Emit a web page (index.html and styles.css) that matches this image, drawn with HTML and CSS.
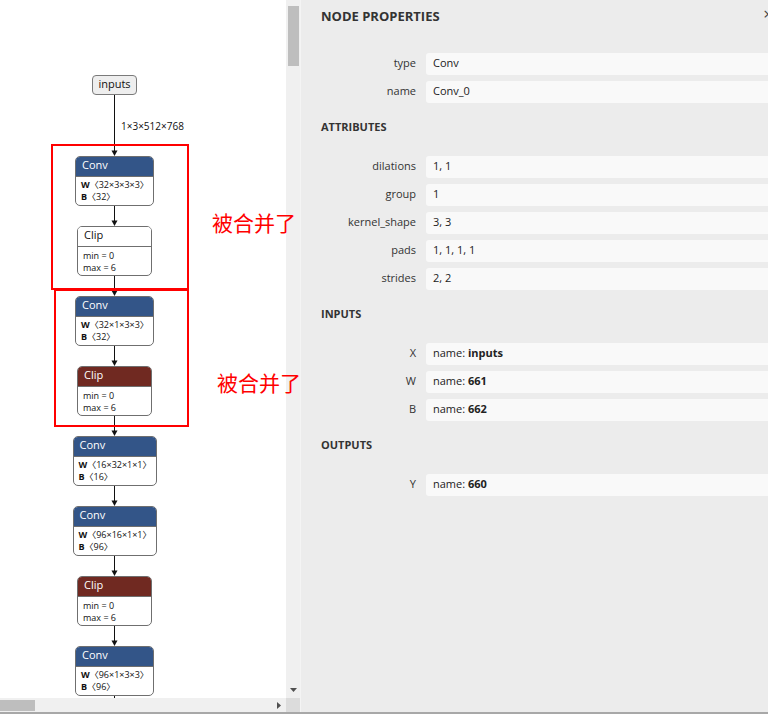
FILE: index.html
```html
<!DOCTYPE html>
<html lang="en">
<head>
<meta charset="utf-8">
<title>Node properties</title>
<link rel="stylesheet" href="styles.css">
</head>
<body>
<div class="app">
  <div class="viewport">
    <div class="canvas">
      <div class="graph">
        <div class="input-node">inputs</div>
        <div class="edge-long">
          <svg class="edge" width="7" height="61" viewBox="0 0 7 61"><line x1="3.5" y1="0" x2="3.5" y2="56" /><path d="M0.5 55.5H6.5L3.5 61Z" /></svg>
          <span class="edge-label">1×3×512×768</span>
        </div>
        <div class="node node-layer node-conv">
          <div class="node-title">Conv</div>
          <div class="node-body"><div><b>W</b>〈32×3×3×3〉</div><div><b>B</b>〈32〉</div></div>
        </div>
        <svg class="edge" width="7" height="20" viewBox="0 0 7 20"><line x1="3.5" y1="0" x2="3.5" y2="15" /><path d="M0.5 14.5H6.5L3.5 20Z" /></svg>
        <div class="node node-plain node-clip">
          <div class="node-title">Clip</div>
          <div class="node-body"><div>min = 0</div><div>max = 6</div></div>
        </div>
        <svg class="edge" width="7" height="20" viewBox="0 0 7 20"><line x1="3.5" y1="0" x2="3.5" y2="15" /><path d="M0.5 14.5H6.5L3.5 20Z" /></svg>
        <div class="node node-layer node-conv">
          <div class="node-title">Conv</div>
          <div class="node-body"><div><b>W</b>〈32×1×3×3〉</div><div><b>B</b>〈32〉</div></div>
        </div>
        <svg class="edge" width="7" height="20" viewBox="0 0 7 20"><line x1="3.5" y1="0" x2="3.5" y2="15" /><path d="M0.5 14.5H6.5L3.5 20Z" /></svg>
        <div class="node node-act node-clip">
          <div class="node-title">Clip</div>
          <div class="node-body"><div>min = 0</div><div>max = 6</div></div>
        </div>
        <svg class="edge" width="7" height="20" viewBox="0 0 7 20"><line x1="3.5" y1="0" x2="3.5" y2="15" /><path d="M0.5 14.5H6.5L3.5 20Z" /></svg>
        <div class="node node-layer node-conv-wide">
          <div class="node-title">Conv</div>
          <div class="node-body"><div><b>W</b>〈16×32×1×1〉</div><div><b>B</b>〈16〉</div></div>
        </div>
        <svg class="edge" width="7" height="20" viewBox="0 0 7 20"><line x1="3.5" y1="0" x2="3.5" y2="15" /><path d="M0.5 14.5H6.5L3.5 20Z" /></svg>
        <div class="node node-layer node-conv-wide">
          <div class="node-title">Conv</div>
          <div class="node-body"><div><b>W</b>〈96×16×1×1〉</div><div><b>B</b>〈96〉</div></div>
        </div>
        <svg class="edge" width="7" height="20" viewBox="0 0 7 20"><line x1="3.5" y1="0" x2="3.5" y2="15" /><path d="M0.5 14.5H6.5L3.5 20Z" /></svg>
        <div class="node node-act node-clip">
          <div class="node-title">Clip</div>
          <div class="node-body"><div>min = 0</div><div>max = 6</div></div>
        </div>
        <svg class="edge" width="7" height="20" viewBox="0 0 7 20"><line x1="3.5" y1="0" x2="3.5" y2="15" /><path d="M0.5 14.5H6.5L3.5 20Z" /></svg>
        <div class="node node-layer node-conv">
          <div class="node-title">Conv</div>
          <div class="node-body"><div><b>W</b>〈96×1×3×3〉</div><div><b>B</b>〈96〉</div></div>
        </div>
        <svg class="edge" width="7" height="20" viewBox="0 0 7 20"><line x1="3.5" y1="0" x2="3.5" y2="15" /><path d="M0.5 14.5H6.5L3.5 20Z" /></svg>
      </div>
    </div>
    <div class="vscroll">
      <div class="vthumb"></div>
      <svg class="arrow-down" width="7" height="4" viewBox="0 0 7 4"><path d="M0 0H7L3.5 4Z" /></svg>
    </div>
    <div class="hscroll">
      <div class="hthumb"></div>
      <svg class="arrow-right" width="4" height="7" viewBox="0 0 4 7"><path d="M0 0V7L4 3.5Z" /></svg>
    </div>
    <div class="corner"></div>

    <div class="mark mark-first"></div>
    <div class="mark mark-second"></div>
    <div class="note note-first">被合并了</div>
    <div class="note note-second">被合并了</div>
  </div>

  <aside class="sidebar">
    <div class="panel-header">
      <span class="panel-title">NODE PROPERTIES</span>
      <span class="panel-close">×</span>
    </div>
    <div class="props">
      <div class="prop"><div class="prop-name">type</div><div class="prop-value">Conv</div></div>
      <div class="prop"><div class="prop-name">name</div><div class="prop-value">Conv_0</div></div>
    </div>

    <div class="section-title">ATTRIBUTES</div>
    <div class="props">
      <div class="prop"><div class="prop-name">dilations</div><div class="prop-value">1, 1</div></div>
      <div class="prop"><div class="prop-name">group</div><div class="prop-value">1</div></div>
      <div class="prop"><div class="prop-name">kernel_shape</div><div class="prop-value">3, 3</div></div>
      <div class="prop"><div class="prop-name">pads</div><div class="prop-value">1, 1, 1, 1</div></div>
      <div class="prop"><div class="prop-name">strides</div><div class="prop-value">2, 2</div></div>
    </div>

    <div class="section-title">INPUTS</div>
    <div class="props">
      <div class="prop"><div class="prop-name">X</div><div class="prop-value">name: <b>inputs</b></div></div>
      <div class="prop"><div class="prop-name">W</div><div class="prop-value">name: <b>661</b></div></div>
      <div class="prop"><div class="prop-name">B</div><div class="prop-value">name: <b>662</b></div></div>
    </div>

    <div class="section-title">OUTPUTS</div>
    <div class="props">
      <div class="prop"><div class="prop-name">Y</div><div class="prop-value">name: <b>660</b></div></div>
    </div>
  </aside>
</div>
</body>
</html>
```

FILE: styles.css
```css
* {
  box-sizing: border-box;
}

html,
body {
  margin: 0;
  padding: 0;
}

body {
  width: 768px;
  height: 714px;
  overflow: hidden;
  background: #ffffff;
  font-family: "Open Sans", "Noto Sans CJK SC", sans-serif;
  color: #222222;
}

.app {
  display: flex;
  height: 714px;
  overflow: hidden;
  border-bottom: 2px solid #a8a8a8;
}

/* ---------- graph viewport ---------- */

.viewport {
  position: relative;
  flex: 0 0 300px;
  display: grid;
  grid-template-columns: 286px 14px;
  grid-template-rows: 698px 14px;
}

.canvas {
  background: #ffffff;
  overflow: hidden;
}

.graph {
  width: 229px;
  display: flex;
  flex-direction: column;
  align-items: center;
  padding-top: 75px;
}

.input-node {
  width: 45px;
  height: 20px;
  border: 1px solid #7a7a7a;
  border-radius: 4px;
  background: #eeeeee;
  font-size: 11px;
  line-height: 16px;
  text-align: center;
  color: #111111;
}

.edge {
  display: block;
  flex: 0 0 auto;
}

.edge line {
  stroke: #111111;
  stroke-width: 1;
}

.edge path {
  fill: #111111;
}

.edge-long {
  position: relative;
  height: 61px;
}

.edge-label {
  position: absolute;
  left: 10px;
  top: 25px;
  font-size: 10px;
  line-height: 12px;
  white-space: nowrap;
  color: #111111;
}

.node {
  flex: 0 0 auto;
  height: 50px;
  border: 1px solid #6f6f6f;
  border-radius: 5px;
  overflow: hidden;
  background: #ffffff;
}

.node-conv {
  width: 79px;
}

.node-conv-wide {
  width: 84px;
}

.node-clip {
  width: 75px;
}

.node-title {
  height: 20px;
  border-bottom: 1px solid #6f6f6f;
  padding-left: 6px;
  font-size: 11px;
  line-height: 16px;
  color: #ffffff;
}

.node-layer .node-title {
  background: #335588;
}

.node-act .node-title {
  background: #702921;
}

.node-plain .node-title {
  background: #ffffff;
  color: #111111;
}

.node-body {
  padding: 2px 0 0 5px;
  font-size: 9px;
  line-height: 12px;
  color: #111111;
  white-space: nowrap;
}

.node-clip .node-body {
  padding-top: 3px;
}

.node-body b {
  font-weight: 700;
}

/* ---------- scrollbars ---------- */

.vscroll {
  background: #f0f0f0;
  display: flex;
  flex-direction: column;
  justify-content: space-between;
  align-items: flex-start;
  padding: 6px 0 6px 0;
}

.vthumb {
  width: 11px;
  height: 60px;
  margin-left: 2px;
  background: #bebebe;
}

.arrow-down {
  display: block;
  margin-left: 4px;
}

.arrow-down path,
.arrow-right path {
  fill: #505050;
}

.hscroll {
  background: #f0f0f0;
  display: flex;
  justify-content: space-between;
  align-items: center;
  padding-right: 5px;
}

.hthumb {
  align-self: flex-start;
  width: 35px;
  height: 11px;
  margin-top: 2px;
  background: #bebebe;
}

.arrow-right {
  display: block;
}

.corner {
  background: #dcdcdc;
}

/* ---------- annotations drawn over the view ---------- */

.mark {
  position: absolute;
  border: 2px solid #ff0000;
  z-index: 2;
}

.mark-first {
  left: 51px;
  top: 144px;
  width: 138px;
  height: 146px;
}

.mark-second {
  left: 54px;
  top: 289px;
  width: 135px;
  height: 138px;
}

.note {
  position: absolute;
  z-index: 3;
  font-family: "Noto Sans CJK SC", sans-serif;
  font-size: 21px;
  line-height: 21px;
  color: #ff0000;
  white-space: nowrap;
}

.note-first {
  left: 212px;
  top: 212px;
}

.note-second {
  left: 217px;
  top: 372px;
}

/* ---------- sidebar ---------- */

.sidebar {
  flex: 0 0 481px;
  background: #ececec;
  border-left: 1px solid #f4f4f4;
  padding: 8px 8px 0 20px;
  font-size: 11px;
  color: #333333;
}

.panel-header {
  display: flex;
  justify-content: space-between;
  align-items: flex-start;
  height: 16px;
  margin-bottom: 29px;
}

.panel-title {
  font-size: 13px;
  font-weight: 700;
  line-height: 16px;
  color: #333333;
}

.panel-close {
  font-size: 17px;
  line-height: 12px;
  color: #444444;
}

.section-title {
  font-size: 11px;
  font-weight: 700;
  line-height: 16px;
  margin: 16px 0 21px 0;
  color: #333333;
}

.props {
  display: flex;
  flex-direction: column;
  gap: 6px;
}

.prop {
  display: flex;
  gap: 10px;
  height: 22px;
}

.prop-name {
  flex: 0 0 95px;
  text-align: right;
  line-height: 20px;
  color: #333333;
  white-space: nowrap;
}

.prop-value {
  flex: 1 1 auto;
  background: #f9f9f9;
  border-radius: 3px;
  padding-left: 7px;
  line-height: 20px;
  color: #222222;
  white-space: nowrap;
}

.prop-value b {
  font-weight: 700;
}
```
